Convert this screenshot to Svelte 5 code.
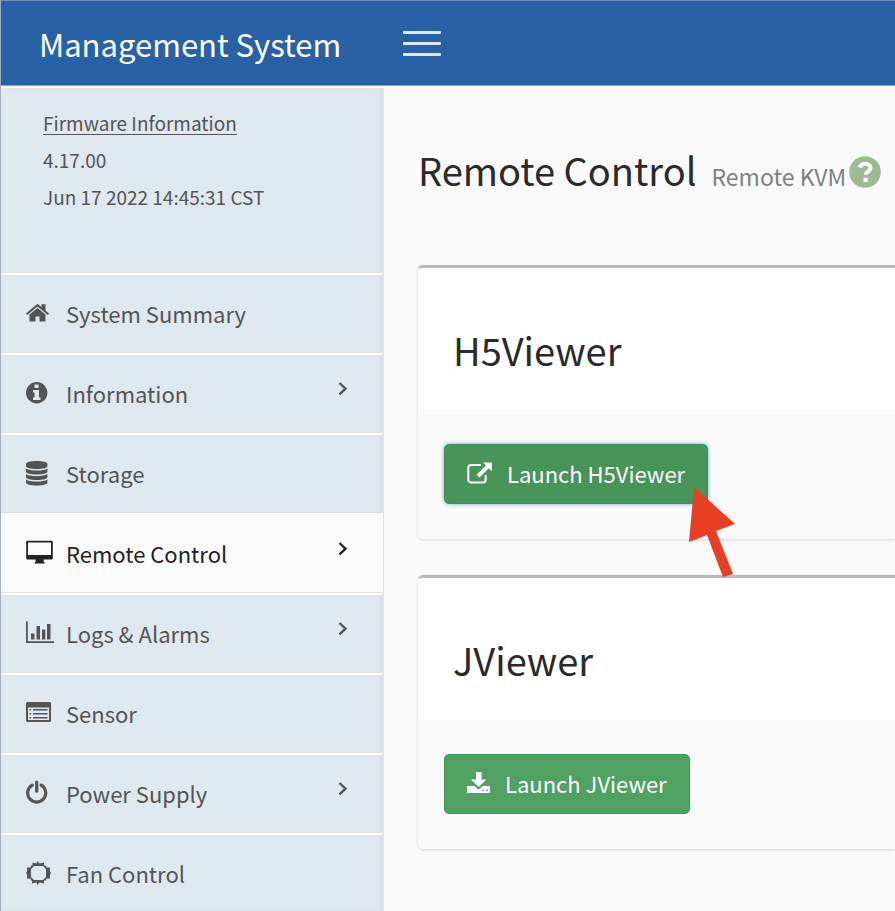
<script lang="ts">
  interface MenuItem {
    label: string;
    icon: string;
    expandable?: boolean;
    active?: boolean;
  }

  const firmware = {
    version: '4.17.00',
    built: 'Jun 17 2022 14:45:31 CST',
  };

  const menu: MenuItem[] = [
    { label: 'System Summary', icon: 'home' },
    { label: 'Information', icon: 'info', expandable: true },
    { label: 'Storage', icon: 'database' },
    { label: 'Remote Control', icon: 'desktop', expandable: true, active: true },
    { label: 'Logs & Alarms', icon: 'chart', expandable: true },
    { label: 'Sensor', icon: 'list' },
    { label: 'Power Supply', icon: 'power', expandable: true },
    { label: 'Fan Control', icon: 'fan' },
  ];
</script>

<div class="app">
  <header class="topbar">
    <a class="brand" href="#home">Management System</a>
    <button class="toggle" aria-label="Toggle navigation">
      <span></span>
      <span></span>
      <span></span>
    </button>
  </header>

  <div class="layout">
    <aside class="sidebar">
      <div class="firmware">
        <a href="#firmware">Firmware Information</a>
        <p>{firmware.version}</p>
        <p>{firmware.built}</p>
      </div>

      <nav>
        {#each menu as item}
          <a class="item" class:active={item.active} href="#{item.icon}">
            <svg class="icon" width="28" height="26" viewBox="0 0 28 26" fill="currentColor" aria-hidden="true">
              {#if item.icon === 'home'}
                <path d="M11.500 8 19.500 14.500v7h-6v-5h-4v5H3.500v-7z" />
                <path d="M11.500 3.800 15.500 7V4.200h4v6.300l3.500 3-1.200 1.400L11.500 6.600 1.200 14.900 0 13.500z" />
              {:else if item.icon === 'info'}
                <path fill-rule="evenodd" d="M10.700 2a10.700 10.700 0 1 1 0 21.400 10.700 10.700 0 0 1 0-21.400zM8.500 4.500v3.500h4V4.500zM7 10v2.500h1.500v5H7V20h7.500v-2.500H13V10z" />
              {:else if item.icon === 'database'}
                <path d="M0 4c0-1.800 4-3 10.700-3s10.700 1.200 10.700 3v2c0 1.800-4 3-10.700 3S0 7.800 0 6z" />
                <path d="M0 8.500c2 1.500 6 2 10.700 2s8.700-.5 10.700-2v3c0 1.800-4 3-10.700 3S0 13.300 0 11.500z" />
                <path d="M0 14c2 1.500 6 2 10.700 2s8.700-.5 10.700-2v3c0 1.800-4 3-10.700 3S0 18.800 0 17z" />
                <path d="M0 19.500c2 1.500 6 2 10.700 2s8.700-.5 10.700-2v3c0 1.800-4 3-10.700 3S0 24.300 0 22.500z" />
              {:else if item.icon === 'desktop'}
                <path fill-rule="evenodd" d="M1 .8h25l.8.8v17l-.8.8h-8.300V22h.8v1.500H8.800V22h.8v-2.600H1l-.8-.8v-17zM2 2.500V15h23V2.500z" />
              {:else if item.icon === 'chart'}
                <path d="M0 1.500h1.800v19.700H28V23H0zM5 13.500h3.500v6H5zM10.500 6H14v13.500h-3.500zM16 9.500h3.300v10H16zM21 4h3.500v15.500H21z" />
              {:else if item.icon === 'list'}
                <path fill-rule="evenodd" d="M1 2h23l1 1v18l-1 1H1l-1-1V3zM2 7.500V20h21V7.500z" />
                <path d="M3.500 9h1.600v1.600H3.500zM3.500 13h1.600v1.600H3.500zM3.500 17h1.600v1.600H3.500zM7 9h14.500v1.600H7zM7 13h14.500v1.600H7zM7 17h14.500v1.600H7z" />
              {:else if item.icon === 'power'}
                <path d="M6.300 5.200a9 9 0 1 0 8.800 0" fill="none" stroke="currentColor" stroke-width="3.200" stroke-linecap="round" />
                <path d="M10.700 2.200v9" fill="none" stroke="currentColor" stroke-width="3.200" stroke-linecap="round" />
              {:else}
                <path fill-rule="evenodd" d="M11.500 1 13.500 3.500 18 2.500v3h2l.5 2h3.500v4l1 1.500-1 1.500v4h-3.500l-.5 2h-2v3l-4.500-1-2 2.500-1-2.500-4.500 1v-3H5l-.5-2H1v-4L0 13l1-1.500v-4h3.500l.5-2h1.500v-3l4 1zM8 6 5 9v8l3 3h9l3-3V9l-3-3z" />
              {/if}
            </svg>
            <span class="label">{item.label}</span>
            {#if item.expandable}
              <svg class="chevron" width="10" height="26" viewBox="0 0 10 26" fill="none" stroke="currentColor" stroke-width="2.400" aria-hidden="true">
                <path d="M1.500 3 7.500 8.700l-6 5.700" />
              </svg>
            {/if}
          </a>
        {/each}
      </nav>
    </aside>

    <main class="content">
      <div class="page-header">
        <h1>Remote Control</h1>
        <small>Remote KVM</small>
        <button class="help" aria-label="Help">
          <svg width="32" height="32" viewBox="0 0 32 32" aria-hidden="true">
            <circle cx="16" cy="16" r="15.800" fill="#9cbb95" />
            <path d="M10.500 11.500c1.200-2.600 3-3.700 5.700-3.700 3 0 5.300 1.700 5.300 4.200 0 3.700-4.700 3.500-4.700 6.800" fill="none" stroke="#fff" stroke-width="4" />
            <path d="M14.500 21.800h4.200v4.200h-4.200z" fill="#fff" />
          </svg>
        </button>
      </div>

      <section class="box">
        <h2>H5Viewer</h2>
        <div class="box-body">
          <div class="launch">
            <button class="btn focused">
              <svg width="26" height="24" viewBox="0 0 26 24" aria-hidden="true">
                <path d="M14 4H4a2.700 2.700 0 0 0-2.700 2.700v12A2.700 2.700 0 0 0 4 21.400h12a2.700 2.700 0 0 0 2.700-2.700V14" fill="none" stroke="currentColor" stroke-width="2" />
                <path d="M16 1.500h8.800v8.800l-3-3-9.300 9.300-2.800-2.800L19 4.500z" fill="currentColor" />
              </svg>
              Launch H5Viewer
            </button>
            <svg class="pointer" width="48" height="92" viewBox="0 0 48 92" aria-hidden="true">
              <path d="M6 1 47 38 28 45l17 43-10 3-16-42L1 56z" fill="#e83f24" />
            </svg>
          </div>
        </div>
      </section>

      <section class="box">
        <h2>JViewer</h2>
        <div class="box-body">
          <button class="btn">
            <svg width="24" height="24" viewBox="0 0 24 24" aria-hidden="true">
              <path d="M9 1h5.500v7.500h5L11.700 16 4 8.500h5z" fill="currentColor" />
              <path fill-rule="evenodd" d="M0 15h7.500l4.200 3.700L16 15h7v7H0zM15.500 18.500V20H17v-1.500zM19.300 18.500V20h1.500v-1.500z" fill="currentColor" />
            </svg>
            Launch JViewer
          </button>
        </div>
      </section>
    </main>
  </div>
</div>

<style>
  :global(body) {
    margin: 0;
    background: #f9f9f9;
  }

  .app {
    height: 100vh;
    display: flex;
    flex-direction: column;
    overflow: hidden;
    box-sizing: border-box;
    border-left: 1px solid #a3adbd;
    font-family: 'Noto Sans CJK SC', 'Open Sans', sans-serif;
    color: #545454;
  }

  .topbar {
    flex: none;
    height: 84px;
    display: flex;
    align-items: center;
    background: #2961a6;
    border-top: 1px solid #6b93c0;
    border-bottom: 1px solid #7fa3cc;
  }

  .brand {
    width: 402px;
    padding-left: 38px;
    box-sizing: border-box;
    color: #fff;
    font-size: 31px;
    text-decoration: none;
  }

  .toggle {
    width: 38px;
    display: grid;
    gap: 8px;
    padding: 0;
    border: 0;
    background: none;
  }

  .toggle span {
    height: 3px;
    border-radius: 1px;
    background: #dfe8f3;
  }

  .layout {
    flex: 1;
    min-height: 0;
    display: flex;
    border-top: 2px solid #fdfdfd;
  }

  .sidebar {
    flex: none;
    width: 383px;
    box-sizing: border-box;
    background: #dfe7ef;
    border-right: 1px solid #dbe2ea;
    box-shadow: inset -6px 0 6px -4px #d3dae6;
  }

  .firmware {
    height: 185px;
    box-sizing: border-box;
    padding: 16px 0 0 42px;
    border-bottom: 1px solid #dadcde;
    font-size: 19px;
    line-height: 37px;
  }

  .firmware a {
    color: inherit;
    text-underline-offset: 3px;
  }

  .firmware p {
    margin: 0;
  }

  .item {
    height: 80px;
    box-sizing: border-box;
    display: flex;
    align-items: center;
    padding: 0 35px 2px 25px;
    border-top: 2px solid #fcfcfc;
    border-bottom: 1px solid #dadcde;
    color: inherit;
    font-size: 22px;
    line-height: 34px;
    text-decoration: none;
  }

  .item.active {
    background: #fafafa;
    color: #222;
  }

  .icon {
    flex: none;
    margin-right: 12px;
  }

  .label {
    flex: 1;
  }

  .content {
    flex: 1;
    min-width: 0;
    padding-left: 34px;
  }

  .page-header {
    height: 177px;
    box-sizing: border-box;
    display: flex;
    align-items: baseline;
    padding-top: 54px;
    white-space: nowrap;
  }

  h1,
  h2 {
    margin: 0;
    color: #2a2a2a;
    font-size: 38px;
    font-weight: 400;
    line-height: 56px;
  }

  small {
    margin-left: 15px;
    color: #808080;
    font-size: 23px;
  }

  .help {
    align-self: flex-start;
    height: 60px;
    margin-left: 3px;
    padding: 0;
    border: 0;
    background: none;
  }

  .help svg {
    display: block;
  }

  .box {
    margin-bottom: 36px;
    border-top: 3px solid #b9b9b9;
    border-radius: 5px 0 0 5px;
    background: #fff;
    box-shadow: 0 1px 3px rgba(0, 0, 0, 0.14);
  }

  .box h2 {
    padding: 54px 35px 32px;
  }

  .box-body {
    padding: 34px 26px 35px;
    background: #f9f9f9;
    border-radius: 0 0 0 5px;
  }

  .launch {
    position: relative;
    width: fit-content;
  }

  .btn {
    height: 60px;
    display: flex;
    align-items: center;
    padding: 0 22px 2px;
    border: 1px solid #44935a;
    border-radius: 5px;
    background: #4fa262;
    color: #fff;
    font-family: inherit;
    font-size: 22px;
    white-space: nowrap;
  }

  .btn svg {
    margin-right: 14px;
  }

  .btn.focused {
    border-color: #3f8d62;
    background: #499559;
    box-shadow: 0 0 4px #6fa6d8;
  }

  .pointer {
    position: absolute;
    left: 244px;
    top: 42px;
  }
</style>
